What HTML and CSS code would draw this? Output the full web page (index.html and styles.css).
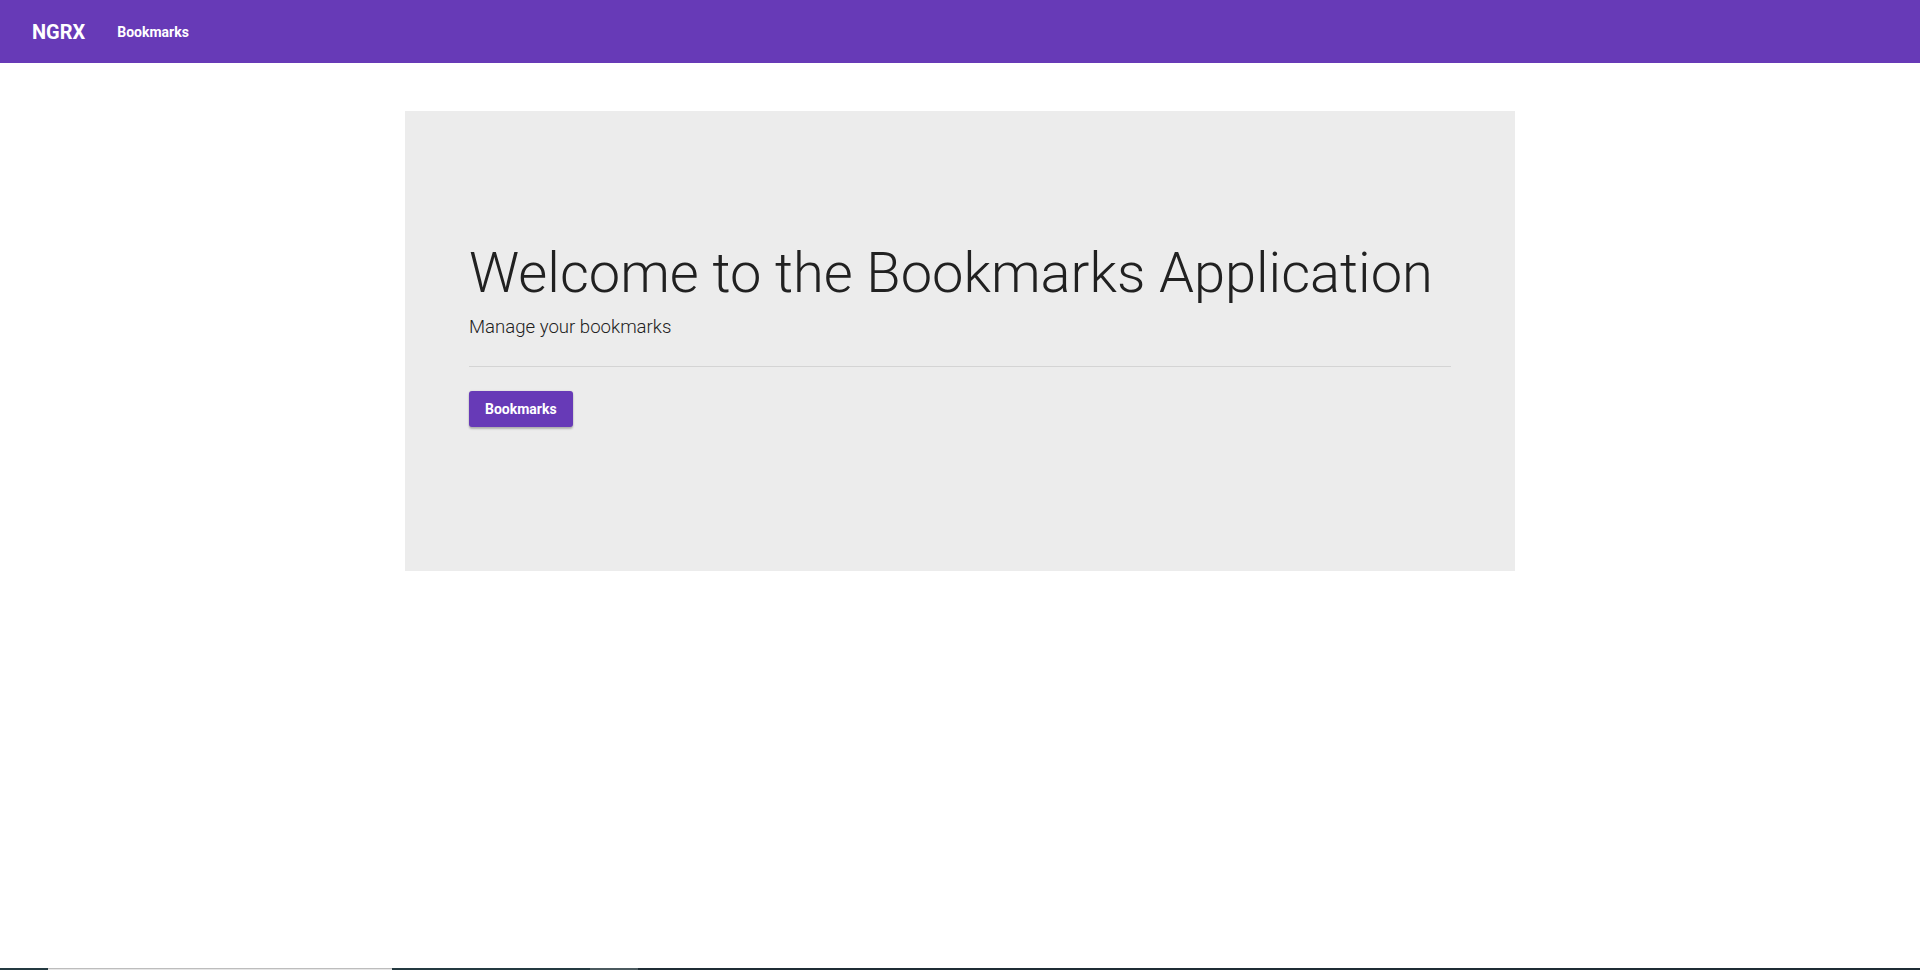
FILE: index.html
```html
<!DOCTYPE html>
<html lang="en">
<head>
<meta charset="utf-8">
<title>Bookmarks</title>
<link rel="stylesheet" href="styles.css">
</head>
<body>
<div class="page">
  <nav class="navbar">
    <a class="brand" href="#">NGRX</a>
    <a class="nav-link" href="#">Bookmarks</a>
  </nav>
  <main class="container">
    <section class="jumbotron">
      <h1 class="display">Welcome to the Bookmarks Application</h1>
      <p class="lead">Manage your bookmarks</p>
      <hr class="divider">
      <a class="btn" href="#">Bookmarks</a>
    </section>
  </main>
  <div class="strip">
    <span class="seg dark s1"></span>
    <span class="seg light s2"></span>
    <span class="seg dark s3"></span>
    <span class="seg grey s4"></span>
    <span class="seg dark2 s5"></span>
  </div>
</div>
</body>
</html>
```
FILE: styles.css
```css
* { box-sizing: border-box; }
html, body { margin: 0; padding: 0; }
body {
  font-family: Roboto, "Noto Sans", Arial, sans-serif;
  color: #212121;
  background: #fff;
}
.page {
  height: 970px;
  display: flex;
  flex-direction: column;
}
.navbar {
  height: 63px;
  background: #673ab7;
  display: flex;
  align-items: center;
  padding: 0 32px;
  gap: 32px;
  flex-shrink: 0;
}
.brand {
  color: #fff;
  text-decoration: none;
  font-size: 20px;
  font-weight: 700;
}
.nav-link {
  color: #fff;
  text-decoration: none;
  font-size: 14px;
  font-weight: 700;
  padding-top: 1px;
}
.container {
  width: 1110px;
  margin: 48px auto 0;
}
.jumbotron {
  background: #ececec;
  height: 460px;
  padding: 129px 64px 0;
}
.display {
  margin: 0 0 7px;
  font-size: 56px;
  font-weight: 300;
  line-height: 1.2;
  color: #212121;
}
.lead {
  margin: 0;
  font-size: 18.6px;
  font-weight: 300;
  line-height: 1.5;
  color: #212121;
}
.divider {
  margin: 24px 0 24px;
  border: 0;
  border-top: 1px solid #d4d4d4;
  height: 0;
}
.btn {
  display: inline-flex;
  align-items: center;
  height: 36px;
  padding: 0 16px;
  background: #673ab7;
  color: #fff;
  text-decoration: none;
  font-size: 14px;
  font-weight: 700;
  border-radius: 3px;
  box-shadow: 0 2px 2px rgba(0,0,0,.24), 0 0 2px rgba(0,0,0,.12);
}
.strip {
  margin-top: auto;
  height: 2px;
  display: flex;
}
.seg { height: 2px; }
.dark { background: #243a41; }
.dark2 { background: #1f2d35; flex: 1; }
.light { background: linear-gradient(#bdbdbd 50%, #e6e6e6 50%); }
.grey { background: #4b5a5f; }
.s1 { width: 48px; }
.s2 { width: 344px; }
.s3 { width: 198px; }
.s4 { width: 48px; }
```
